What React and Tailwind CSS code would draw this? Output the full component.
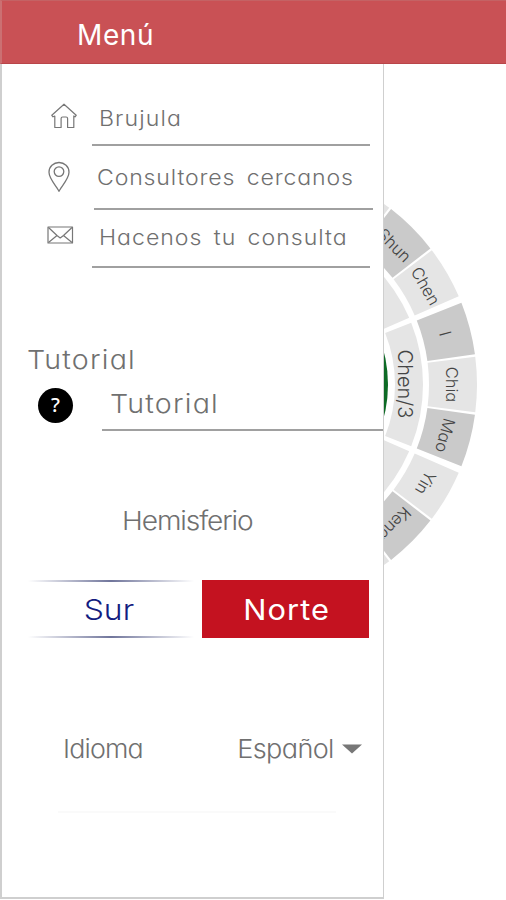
import React from 'react';

const MENU_ITEMS = [
  { id: 'brujula', label: 'Brujula', icon: 'home' },
  { id: 'consultores', label: 'Consultores cercanos', icon: 'pin' },
  { id: 'consulta', label: 'Hacenos tu consulta', icon: 'mail' },
];

const ROW_STYLES = {
  brujula: 'ml-[90px] h-[82px] w-[278px] pl-[7px] pb-[12px]',
  consultores: 'ml-[92px] h-[64px] w-[279px] pl-[3px] pb-[17px]',
  consulta: 'ml-[90px] h-[58px] w-[278px] pl-[7px] pb-[15px]',
};

const TEXT_STYLES = {
  brujula: 'tracking-[1px]',
  consultores: 'tracking-[0.75px] [word-spacing:4px]',
  consulta: 'tracking-[0.9px] [word-spacing:3.5px]',
};

const ICON_STYLES = {
  brujula: '-left-[41px] bottom-[15px]',
  consultores: '-left-[47px] bottom-[15px]',
  consulta: '-left-[45px] bottom-[22px]',
};

const CENTER = { x: 255, y: 384.5 };

const OUTER_RING = [
  { label: '', angle: -60, fill: '#e3e3e3' },
  { label: 'Shun', angle: -45, fill: '#cacaca' },
  { label: 'Chen', angle: -30, fill: '#e5e5e5' },
  { label: 'I', angle: -15, fill: '#cacaca' },
  { label: 'Chia', angle: 0, fill: '#e5e5e5' },
  { label: 'Mao', angle: 15, fill: '#cacaca' },
  { label: 'Yin', angle: 30, fill: '#e5e5e5' },
  { label: 'Keng', angle: 45, fill: '#cacaca' },
  { label: '', angle: 60, fill: '#e3e3e3' },
];

function polar(r, deg) {
  const a = (deg * Math.PI) / 180;
  return `${(CENTER.x + r * Math.cos(a)).toFixed(2)} ${(CENTER.y + r * Math.sin(a)).toFixed(2)}`;
}

function sector(r1, r2, from, to) {
  return `M${polar(r2, from)}A${r2} ${r2} 0 0 1 ${polar(r2, to)}L${polar(r1, to)}A${r1} ${r1} 0 0 0 ${polar(r1, from)}Z`;
}

const MenuIcon = ({ name }) => {
  if (name === 'home') {
    return (
      <svg width="26" height="26" viewBox="0 0 26 26" fill="none" stroke="#777" strokeWidth="1.2" strokeLinejoin="round">
        <path d="M0.8 12.3 13 1.2 25.2 12.3 24 13.8 22.8 13V24.5H16.6V15.5Q16.6 14 15.1 14H11.6Q10.1 14 10.1 15.5V24.5H3.8V13L2 13.8Z" />
      </svg>
    );
  }
  if (name === 'pin') {
    return (
      <svg width="24" height="32" viewBox="0 0 24 32" fill="none" stroke="#777" strokeWidth="1.3" strokeLinejoin="round">
        <path d="M12 30.3C10.6 26.5 2 18 2 11.2A10 9.7 0 0 1 22 11.2C22 18 13.4 26.5 12 30.3Z" />
        <circle cx="12" cy="10.6" r="4.8" />
      </svg>
    );
  }
  return (
    <svg width="27" height="18" viewBox="0 0 27 18" fill="none" stroke="#777" strokeWidth="1.2" strokeLinejoin="round">
      <rect x="1" y="1" width="24.5" height="16" />
      <path d="M1.5 1.5 10 9.5 13.2 12 16.5 9.5 25 1.5M1.5 16.5 10 9.5M25 16.5 16.5 9.5" />
    </svg>
  );
};

const Compass = () => (
  <svg width="506" height="900" viewBox="0 0 506 900" className="absolute top-0 left-0 font-[350]">
    <circle cx={CENTER.x} cy={CENTER.y} r="133" fill="#0d6a25" />
    {OUTER_RING.map(({ label, angle, fill }) => {
      // wider gap where one trigram ends and the next begins
      const start = angle === -15 || angle === 30 ? 0.9 : 0.3;
      const end = angle === -30 || angle === 15 ? 0.9 : 0.3;
      return (
        <g key={angle}>
          <path d={sector(174, 222, angle - 7.5 + start, angle + 7.5 - end)} fill={fill} />
          <text
            x={CENTER.x + 191}
            y={CENTER.y}
            transform={`rotate(${angle} ${CENTER.x} ${CENTER.y}) rotate(90 ${CENTER.x + 191} ${CENTER.y})`}
            textAnchor="middle"
            fontSize="16.5"
            fill="#444"
          >
            {label}
          </text>
        </g>
      );
    })}
    {[-45, 0, 45].map((angle) => (
      <path key={angle} d={sector(140, 168, angle - 21.6, angle + 21.6)} fill="#e5e5e5" />
    ))}
    <text x="397.5" y="384" transform="rotate(90 397.5 384)" textAnchor="middle" fontSize="20" fill="#444">
      Chen/3
    </text>
  </svg>
);

const HemisphereSwitch = () => (
  <div className="mt-[42px] ml-[26px] flex h-[58px] w-[341px]">
    <button type="button" className="flex w-[166px] flex-col text-[29px] text-[#131c80]">
      <span className="h-[2px] w-full bg-linear-to-r from-transparent via-[#70759b] to-transparent" />
      <span className="flex h-[55px] w-full items-center justify-center pt-[2px] pr-[4px]">
        <span className="scale-x-110">Sur</span>
      </span>
      <span className="h-[2px] w-full bg-linear-to-r from-transparent via-[#70759b] to-transparent" />
    </button>
    <button type="button" className="ml-[8px] w-[167px] bg-[#c41220] pt-[2px] text-[28px] text-white">
      <span className="inline-block scale-x-110 pl-[2px] font-normal tracking-[1px]">Norte</span>
    </button>
  </div>
);

export default function App() {
  return (
    <div className="relative h-[900px] w-[506px] overflow-hidden bg-white font-['Inter',sans-serif] font-light text-[#707070] [font-feature-settings:'cv11']">
      <Compass />
      <header className="relative flex h-[64px] items-center border-t border-b border-l-2 border-t-[#c46264] border-b-[#b94549] border-l-[#cb7072] bg-[#c95155] pt-[6px] pl-[75px]">
        <h1 className="text-[28px] font-[380] tracking-[0.6px] text-white">Menú</h1>
      </header>

      <aside className="relative h-[835px] w-[383.5px] border-r-[1.5px] border-b-2 border-l-2 border-[#cfcfcf] bg-white">
        <nav>
          {MENU_ITEMS.map(({ id, label, icon }) => (
            <div key={id} className={`relative flex items-end border-b-2 border-[#a0a0a0] whitespace-nowrap ${ROW_STYLES[id]}`}>
              <span className={`absolute ${ICON_STYLES[id]}`}>
                <MenuIcon name={icon} />
              </span>
              <span className={`origin-left scale-x-110 text-[21px] leading-[26px] ${TEXT_STYLES[id]}`}>{label}</span>
            </div>
          ))}
        </nav>

        <section>
          <h2 className="mt-[75px] ml-[25px] origin-left scale-x-110 text-[26px] leading-[34px] tracking-[1.1px]">Tutorial</h2>
          <div className="ml-[36px] flex">
            <span className="mt-[11px] flex h-[35px] w-[35px] items-center justify-center rounded-full bg-black pb-[2px] font-['Noto_Sans',sans-serif] text-[20px] font-medium text-white">
              ?
            </span>
            <div className="ml-[29px] h-[54px] flex-1 border-b-2 border-[#a0a0a0] pt-[10px] pl-[8px]">
              <span className="block origin-left scale-x-110 text-[26px] leading-[34px] tracking-[1.1px]">Tutorial</span>
            </div>
          </div>
        </section>

        <section>
          <h2 className="mt-[73px] ml-[120px] origin-left scale-x-[1.08] text-[26px] leading-[34px] tracking-[-1px]">Hemisferio</h2>
          <HemisphereSwitch />
        </section>

        <div className="mt-[94px] ml-[61px] flex w-[299px] items-center text-[26px] leading-[34px]">
          <span className="origin-left scale-x-[1.03] tracking-[-0.8px]">Idioma</span>
          <span className="ml-auto origin-right scale-x-[1.04] tracking-[-0.6px]">Español</span>
          <svg width="20" height="10" viewBox="0 0 20 10" className="ml-[8px]">
            <path d="M0 0.5H20L10 9.5Z" fill="#777" />
          </svg>
        </div>
        <div className="mt-[45px] ml-[56px] h-[2px] w-[278px] bg-[#fafafa]" />
      </aside>
    </div>
  );
}
